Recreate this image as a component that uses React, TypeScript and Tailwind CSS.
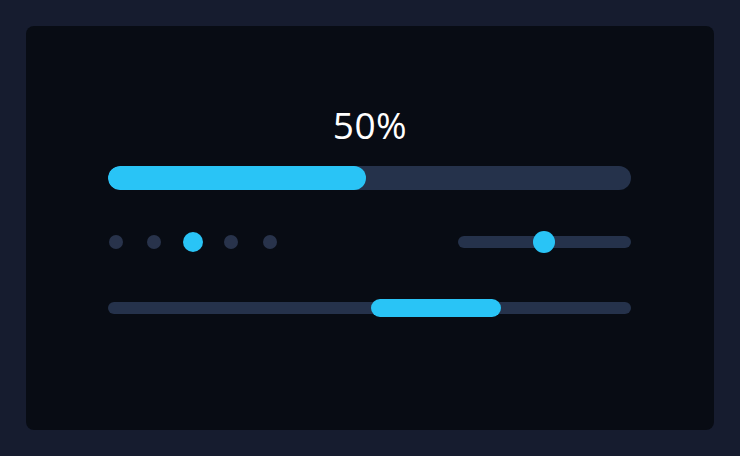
const dots = [false, false, true, false, false];

export default function App() {
    return (
        <div className="w-[740px] h-[456px] bg-[#161c2f] p-[26px]" style={{ fontFamily: '"Open Sans", sans-serif' }}>
            <div className="h-[404px] w-[688px] bg-[#080c14] rounded-lg flex flex-col items-center pt-[81px]">
                <div className="text-[37px] leading-[36px] text-white font-normal tracking-[0.5px]">50%</div>

                <div className="w-[523px] mt-[23px] self-start ml-[82px]">
                    {/* main progress */}
                    <div className="h-[24px] w-full rounded-full bg-[#25324b] overflow-hidden">
                        <div className="h-full w-[258px] rounded-full bg-[#29c4f6]"></div>
                    </div>

                    {/* pager dots + slider */}
                    <div className="mt-[41px] h-[22px] flex items-center justify-between">
                        <div className="flex items-center gap-[23.5px]">
                            {dots.map((active, i) => (
                                <div key={i} className="w-[15px] h-[22px] flex items-center justify-center">
                                    {active ? (
                                        <div className="shrink-0 w-[20px] h-[20px] rounded-full bg-[#29c4f6]"></div>
                                    ) : (
                                        <div className="shrink-0 w-[14px] h-[14px] rounded-full bg-[#28334b]"></div>
                                    )}
                                </div>
                            ))}
                        </div>
                        <div className="relative w-[173px] h-[12px] rounded-full bg-[#25324b]">
                            <div className="absolute left-[75px] top-[-5px] w-[22px] h-[22px] rounded-full bg-[#29c4f6]"></div>
                        </div>
                    </div>

                    {/* range bar */}
                    <div className="mt-[49px] relative h-[12px] w-full rounded-full bg-[#25324b]">
                        <div className="absolute left-[263px] top-[-3px] w-[130px] h-[18px] rounded-full bg-[#29c4f6]"></div>
                    </div>
                </div>
            </div>
        </div>
    );
}
